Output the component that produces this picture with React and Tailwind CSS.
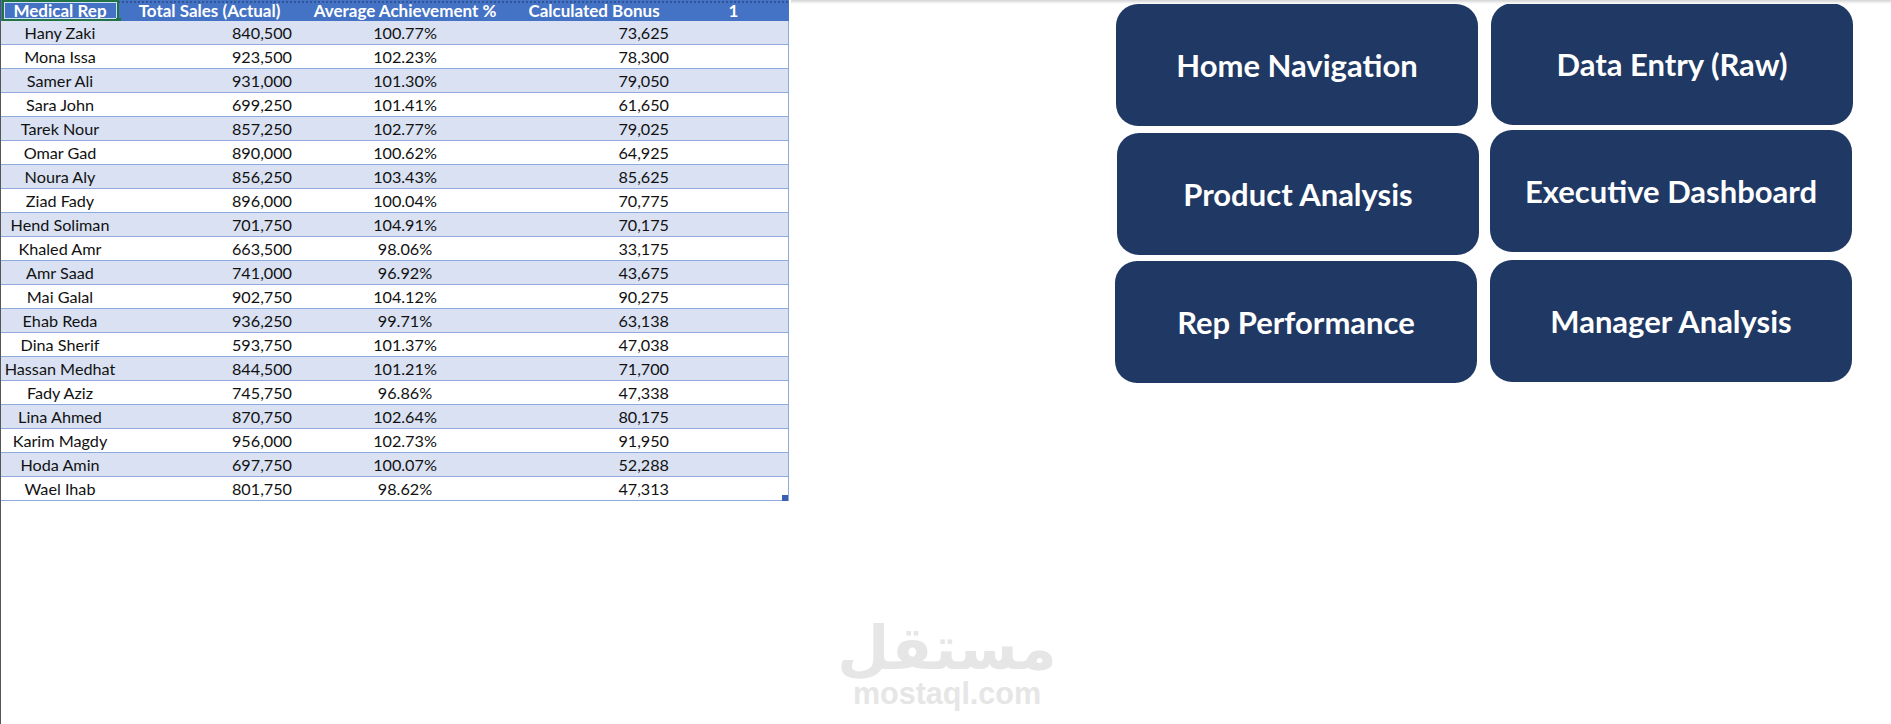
import React from 'react';

const rows = [
  ['Hany Zaki', '840,500', '100.77%', '73,625'],
  ['Mona Issa', '923,500', '102.23%', '78,300'],
  ['Samer Ali', '931,000', '101.30%', '79,050'],
  ['Sara John', '699,250', '101.41%', '61,650'],
  ['Tarek Nour', '857,250', '102.77%', '79,025'],
  ['Omar Gad', '890,000', '100.62%', '64,925'],
  ['Noura Aly', '856,250', '103.43%', '85,625'],
  ['Ziad Fady', '896,000', '100.04%', '70,775'],
  ['Hend Soliman', '701,750', '104.91%', '70,175'],
  ['Khaled Amr', '663,500', '98.06%', '33,175'],
  ['Amr Saad', '741,000', '96.92%', '43,675'],
  ['Mai Galal', '902,750', '104.12%', '90,275'],
  ['Ehab Reda', '936,250', '99.71%', '63,138'],
  ['Dina Sherif', '593,750', '101.37%', '47,038'],
  ['Hassan Medhat', '844,500', '101.21%', '71,700'],
  ['Fady Aziz', '745,750', '96.86%', '47,338'],
  ['Lina Ahmed', '870,750', '102.64%', '80,175'],
  ['Karim Magdy', '956,000', '102.73%', '91,950'],
  ['Hoda Amin', '697,750', '100.07%', '52,288'],
  ['Wael Ihab', '801,750', '98.62%', '47,313'],
];

const NavButton = ({ label, className }) => (
  <div className={`flex h-[122px] w-[362px] items-center justify-center rounded-[22px] bg-[#203864] text-[31px] font-bold text-white ${className}`}>
    {label}
  </div>
);

const App = () => {
  return (
    <div className="relative flex h-[724px] w-[1891px] overflow-hidden border-l border-[#555] bg-white font-['Lato',sans-serif]">
      {/* top edge of the ribbon shadow */}
      <div className="absolute left-[790px] right-0 top-0 h-[4px] bg-gradient-to-b from-[#d4d4d4] to-white" />

      <div className="w-[788px] shrink-0">
        <div className="relative flex h-[21px] items-center bg-[#4472c4] text-[17px] font-bold text-white">
          <div className="absolute inset-x-0 top-0 h-[4px] bg-[radial-gradient(#2f5597_1px,transparent_1px)] bg-[length:4px_4px]" />
          <div className="relative w-[118px] text-center">Medical Rep</div>
          <div className="relative w-[181px] text-center">Total Sales (Actual)</div>
          <div className="relative w-[210px] text-center">Average Achievement %</div>
          <div className="relative w-[168px] text-center">Calculated Bonus</div>
          <div className="relative w-[111px] text-center">1</div>
          {/* active cell selection */}
          <div className="absolute left-px top-0 h-[21px] w-[117px] border-2 border-[#217346]">
            <div className="h-full w-full border border-[#cfe0f5]" />
          </div>
          <div className="absolute left-[115px] top-[18px] h-[5px] w-[5px] bg-[#217346]" />
        </div>

        <div className="relative border-r border-[#8ea9db] text-[16.2px] text-[#111]">
          {rows.map((row, i) => (
            <div
              key={row[0]}
              className={`flex h-[24px] items-center border-b border-[#8ea9db] pt-[2px] ${i % 2 === 0 ? 'bg-[#d9e1f2]' : 'bg-white'}`}
            >
              <div className="w-[118px] whitespace-nowrap text-center">{row[0]}</div>
              <div className="w-[181px] pr-[8px] text-right">{row[1]}</div>
              <div className="w-[210px] text-center">{row[2]}</div>
              <div className="w-[168px] pr-[9px] text-right">{row[3]}</div>
            </div>
          ))}
          <div className="absolute bottom-0 right-0 h-[6px] w-[6px] bg-[#3a5fb0]" />
        </div>
      </div>

      <div className="ml-[326px] flex">
        <div className="flex flex-col">
          <NavButton label="Home Navigation" className="ml-px mt-[4px]" />
          <NavButton label="Product Analysis" className="ml-[2px] mt-[7px]" />
          <NavButton label="Rep Performance" className="mt-[6px]" />
        </div>
        <div className="ml-[11px] flex flex-col">
          <NavButton label="Data Entry (Raw)" className="ml-px mt-[3px]" />
          <NavButton label="Executive Dashboard" className="mt-[5px]" />
          <NavButton label="Manager Analysis" className="mt-[8px]" />
        </div>
      </div>

      {/* watermark */}
      <div className="absolute left-[846px] top-[612px] flex w-[200px] flex-col items-center text-[#e6e6e6]">
        <div dir="rtl" className="h-[66px] whitespace-nowrap font-['DejaVu_Sans',sans-serif] text-[60px] font-bold leading-[72px]">
          مستقل
        </div>
        <div className="font-['Liberation_Sans',sans-serif] text-[30.5px] font-bold leading-[30px]">mostaql.com</div>
      </div>
    </div>
  );
};

export default App;
